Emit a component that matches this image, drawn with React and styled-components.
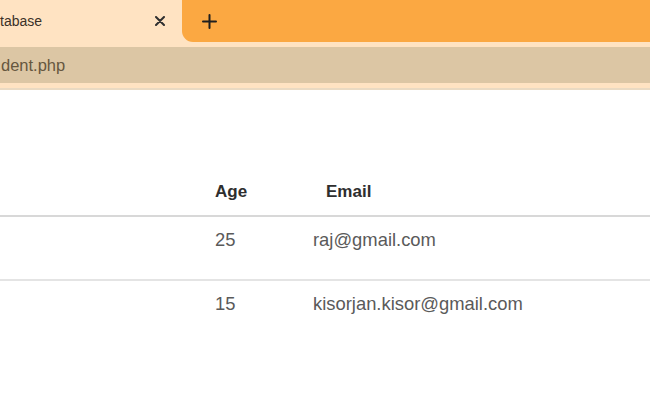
import styled, { createGlobalStyle } from 'styled-components';

const GlobalStyle = createGlobalStyle`
  html, body {
    margin: 0;
    padding: 0;
    background: #ffffff;
    overflow: hidden;
  }
  body {
    font-family: "Liberation Sans", Arial, sans-serif;
  }
`;

const students = [
  { age: 25, email: 'raj@gmail.com' },
  { age: 15, email: 'kisorjan.kisor@gmail.com' },
];

export default function App() {
  return (
    <>
      <GlobalStyle />
      <Browser>
        <TabStrip>
          <Tab>
            <TabTitle>tabase</TabTitle>
            <IconButton aria-label="Close tab">
              <svg width="10" height="10" viewBox="0 0 10 10">
                <path d="M1 1 L9 9 M9 1 L1 9" stroke="#2f2f2f" strokeWidth="2" strokeLinecap="round" />
              </svg>
            </IconButton>
          </Tab>
          <TabFiller>
            <IconButton aria-label="New tab">
              <svg width="15" height="15" viewBox="0 0 15 15">
                <path d="M7.5 1 V14 M1 7.5 H14" stroke="#1f1f1f" strokeWidth="2" strokeLinecap="round" />
              </svg>
            </IconButton>
          </TabFiller>
        </TabStrip>
        <Toolbar>
          <Omnibox>
            <Url>dent.php</Url>
          </Omnibox>
        </Toolbar>
      </Browser>

      <Page>
        <Table>
          <thead>
            <tr>
              <HeadCell $width="215px" />
              <HeadCell $width="98px">Age</HeadCell>
              <HeadCell $indent="13px">Email</HeadCell>
            </tr>
          </thead>
          <tbody>
            {students.map((s) => (
              <Row key={s.email}>
                <Cell />
                <Cell>{s.age}</Cell>
                <Cell>{s.email}</Cell>
              </Row>
            ))}
          </tbody>
        </Table>
      </Page>
    </>
  );
}

const Browser = styled.div`
  display: flex;
  flex-direction: column;
`;

const TabStrip = styled.div`
  display: flex;
  height: 42px;
  background: #ffe3c2;
`;

const Tab = styled.div`
  width: 182px;
  display: flex;
  align-items: center;
  padding-right: 12px;
  box-sizing: border-box;
  background: #ffe3c2;
`;

const TabTitle = styled.span`
  flex: 1;
  font-size: 14px;
  color: #3a3128;
  white-space: nowrap;
`;

const IconButton = styled.button`
  width: 20px;
  height: 20px;
  display: flex;
  align-items: center;
  justify-content: center;
  padding: 0;
  border: none;
  background: transparent;
`;

const TabFiller = styled.div`
  flex: 1;
  display: flex;
  align-items: center;
  padding-left: 17px;
  background: #fba842;
  border-bottom-left-radius: 11px;
`;

const Toolbar = styled.div`
  padding: 5px 0;
  background: #ffe3c2;
  border-bottom: 2px solid #eadac2;
`;

const Omnibox = styled.div`
  height: 36px;
  display: flex;
  align-items: center;
  background: #dcc6a4;
`;

const Url = styled.span`
  padding-left: 1px;
  font-size: 16.5px;
  color: #66573f;
  white-space: nowrap;
`;

const Page = styled.div`
  padding-top: 91px;
`;

const Table = styled.table`
  width: 100%;
  border-collapse: collapse;
  font-size: 18.4px;
  line-height: 22px;
`;

const HeadCell = styled.th`
  width: ${(p) => p.$width || 'auto'};
  padding: 0 0 12px ${(p) => p.$indent || '0'};
  text-align: left;
  font-size: 17px;
  font-weight: 700;
  color: #2e2e2e;
  border-bottom: 2px solid #d8d8d8;
`;

const Row = styled.tr`
  border-bottom: 2px solid #e4e4e4;

  &:last-child {
    border-bottom: none;
  }
`;

const Cell = styled.td`
  padding: 12px 0 28px;
  color: #5a5a5a;
  white-space: nowrap;
`;
